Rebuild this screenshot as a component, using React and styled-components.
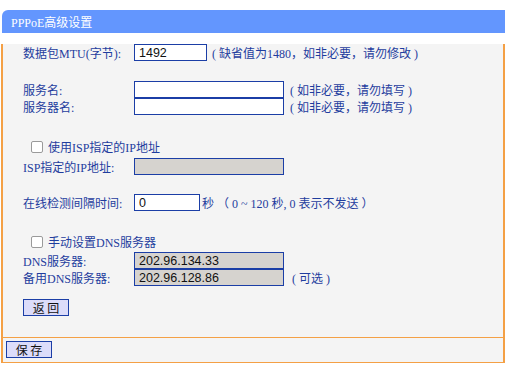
import styled, { createGlobalStyle } from "styled-components";

const colors = {
  header: "#6396fe",
  orange: "#f4a045",
  panel: "#f4f4f4",
  text: "#1f3d9e",
  field: "#1b3ea6",
  disabled: "#d6d3cf",
  button: "#dcdcfa",
};

const GlobalStyle = createGlobalStyle`
  body {
    margin: 0;
    background: #fff;
    font-family: "Liberation Serif", "Noto Sans CJK SC", serif;
    font-size: 12px;
    color: ${colors.text};
  }
`;

const AdvancedPPPoE = () => {
  return (
    <Panel>
      <Header>PPPoE高级设置</Header>
      <Body>
        <Row $top={11}>
          <Label>数据包MTU(字节):</Label>
          <Field $w={73} defaultValue="1492" />
          <Hint $gap={5}>( 缺省值为1480，如非必要，请勿修改 )</Hint>
        </Row>

        <Row $top={20}>
          <Label>服务名:</Label>
          <Field $w={150} />
          <Hint $gap={6}>( 如非必要，请勿填写 )</Hint>
        </Row>
        <Row>
          <Label>服务器名:</Label>
          <Field $w={150} />
          <Hint $gap={6}>( 如非必要，请勿填写 )</Hint>
        </Row>

        <CheckRow $top={23}>
          <Check type="checkbox" />
          <span>使用ISP指定的IP地址</span>
        </CheckRow>
        <Row $top={3}>
          <Label>ISP指定的IP地址:</Label>
          <Field $w={150} disabled />
        </Row>

        <Row $top={19}>
          <Label>在线检测间隔时间:</Label>
          <Field $w={66} defaultValue="0" />
          <Hint $gap={2}>秒 （ 0 ~ 120 秒, 0 表示不发送 ）</Hint>
        </Row>

        <CheckRow $top={22}>
          <Check type="checkbox" />
          <span>手动设置DNS服务器</span>
        </CheckRow>
        <Row $top={2}>
          <Label>DNS服务器:</Label>
          <Field $w={150} disabled defaultValue="202.96.134.33" />
        </Row>
        <Row>
          <Label>备用DNS服务器:</Label>
          <Field $w={150} disabled defaultValue="202.96.128.86" />
          <Hint $gap={8}>( 可选 )</Hint>
        </Row>

        <Row $top={13}>
          <Button>返 回</Button>
        </Row>
      </Body>
      <Footer>
        <Button>保 存</Button>
      </Footer>
    </Panel>
  );
};

export default function App() {
  return (
    <>
      <GlobalStyle />
      <AdvancedPPPoE />
    </>
  );
}

const Panel = styled.div`
  margin: 10px 0 0 1px;
  width: 504px;
`;

const Header = styled.div`
  height: 23px;
  margin-left: 1px;
  padding-left: 9px;
  display: flex;
  align-items: center;
  background: ${colors.header};
  color: #fff;
  border-top-left-radius: 6px;
  font-size: 12px;
`;

const Body = styled.div`
  background: ${colors.panel};
  border-left: 2px solid ${colors.orange};
  border-right: 2px solid ${colors.orange};
  padding: 0 0 21px 20px;
`;

const Row = styled.div`
  display: flex;
  align-items: center;
  height: 17px;
  margin-top: ${(p) => p.$top || 0}px;
`;

const CheckRow = styled(Row)`
  padding-left: 8px;
  gap: 5px;
`;

const Label = styled.span`
  width: 111px;
  flex-shrink: 0;
  white-space: nowrap;
`;

const Field = styled.input`
  box-sizing: border-box;
  width: ${(p) => p.$w}px;
  height: 17px;
  margin: 0;
  padding: 0 4px;
  border: 1px solid ${colors.field};
  background: #fff;
  font-family: "Liberation Sans", sans-serif;
  font-size: 12.5px;
  color: #111;
  outline: none;

  &:disabled {
    background: ${colors.disabled};
    color: #111;
  }
`;

const Hint = styled.span`
  margin-left: ${(p) => p.$gap}px;
  white-space: nowrap;
`;

const Check = styled.input`
  appearance: none;
  box-sizing: border-box;
  width: 12px;
  height: 12px;
  margin: 0;
  border: 1px solid #9a9a9a;
  border-radius: 2px;
  background: #fff;
`;

const Button = styled.button`
  box-sizing: border-box;
  width: 46px;
  height: 17px;
  padding: 0;
  border: 1px solid ${colors.field};
  background: ${colors.button};
  font-family: "Noto Sans CJK SC", sans-serif;
  font-size: 12px;
  color: #111;
  line-height: 1;
`;

const Footer = styled.div`
  background: ${colors.panel};
  border: 2px solid ${colors.orange};
  border-top-width: 1px;
  border-bottom-width: 1px;
  padding: 3px 0 4px 3px;
  display: flex;
`;
